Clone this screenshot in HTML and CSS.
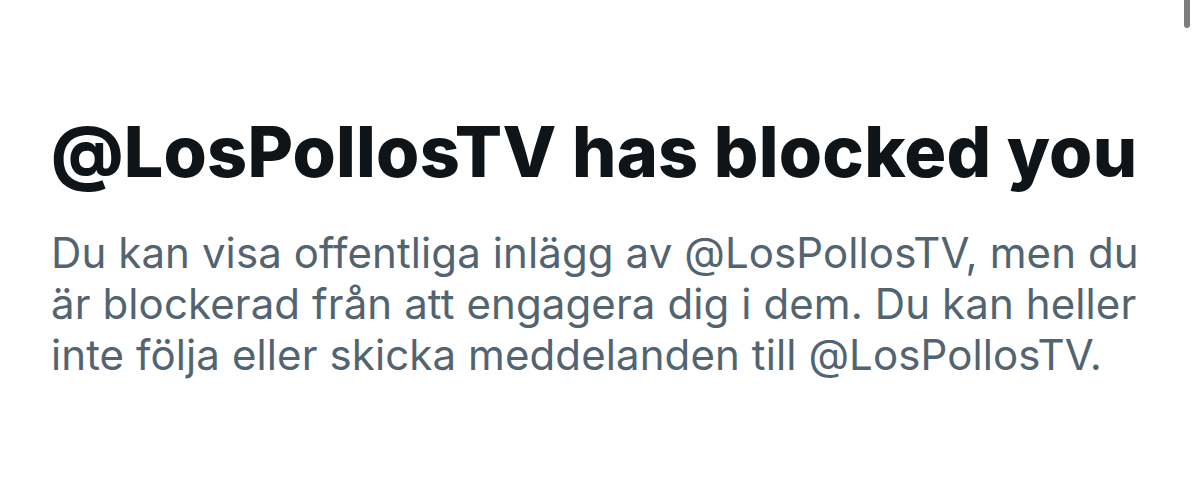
FILE: index.html
```html
<!DOCTYPE html>
<html lang="sv">
<head>
<meta charset="utf-8">
<link rel="stylesheet" href="styles.css">
</head>
<body>
<div class="scrollbar"></div>
<main class="page">
  <h1 class="title">@LosPollosTV has blocked you</h1>
  <p class="desc">Du kan visa offentliga inlägg av @LosPollosTV, men du är blockerad från att engagera dig i dem. Du kan heller inte följa eller skicka meddelanden till @LosPollosTV.</p>
</main>
</body>
</html>
```

FILE: styles.css
```css
html, body {
  margin: 0;
  padding: 0;
  background: #ffffff;
}
body {
  width: 1200px;
  height: 496px;
  overflow: hidden;
  position: relative;
  font-family: Inter, "Noto Sans", Roboto, sans-serif;
}
.scrollbar {
  position: absolute;
  top: 0;
  left: 1184px;
  width: 6px;
  height: 28px;
  background: #7d7d7d;
  border-radius: 0 0 3px 3px;
}
.page {
  padding: 110px 0 0 51px;
  width: 1105px;
}
.title {
  margin: 0;
  font-size: 70px;
  font-weight: 800;
  line-height: 84px;
  color: #0f1419;
  letter-spacing: 0.2px;
  white-space: nowrap;
}
.desc {
  margin: 33px 0 0 0;
  font-size: 42px;
  font-weight: 400;
  line-height: 51px;
  color: #536471;
  letter-spacing: 0.1px;
}
```
